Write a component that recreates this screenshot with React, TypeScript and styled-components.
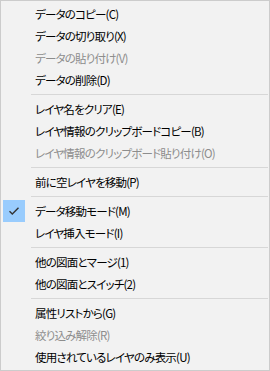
import { FC } from 'react';
import styled, { createGlobalStyle } from 'styled-components';

const GlobalStyle = createGlobalStyle`
    html, body {
        margin: 0;
        padding: 0;
        background: #f2f2f2;
    }
`

const MenuBox = styled.div`
    width: 270px;
    height: 371px;
    box-sizing: border-box;
    background: #f2f2f2;
    border: 1px solid #cccccc;
    padding: 2px;
    display: flex;
    flex-direction: column;
    font-family: "Noto Sans CJK JP", "Noto Sans", sans-serif;
    font-size: 11.5px;
    letter-spacing: -0.8px;
    font-feature-settings: "palt";
`

interface IItemRow {
    disabled?: boolean;
}

const ItemRow = styled.div<IItemRow>`
    height: 22px;
    display: flex;
    align-items: center;
    color: ${props => props.disabled ? '#8d8d8d' : '#000'};
`

interface IGutter {
    checked?: boolean;
}

const Gutter = styled.div<IGutter>`
    width: 22px;
    height: 22px;
    margin-right: 10px;
    display: flex;
    align-items: center;
    justify-content: center;
    background: ${props => props.checked ? '#99ccfd' : 'transparent'};
`

const Label = styled.span`
    line-height: 22px;
    white-space: nowrap;
`

const Separator = styled.div`
    height: 7px;
    display: flex;
    align-items: center;
    padding-left: 28px;
    margin-right: -1px;
    &::after {
        content: '';
        display: block;
        flex: 1;
        height: 1px;
        background: #d7d7d7;
    }
`

type Entry = { label: string; disabled?: boolean; checked?: boolean } | 'sep';

const entries: Entry[] = [
    { label: 'データのコピー(C)' },
    { label: 'データの切り取り(X)' },
    { label: 'データの貼り付け(V)', disabled: true },
    { label: 'データの削除(D)' },
    'sep',
    { label: 'レイヤ名をクリア(E)' },
    { label: 'レイヤ情報のクリップボードコピー(B)' },
    { label: 'レイヤ情報のクリップボード貼り付け(O)', disabled: true },
    'sep',
    { label: '前に空レイヤを移動(P)' },
    'sep',
    { label: 'データ移動モード(M)', checked: true },
    { label: 'レイヤ挿入モード(I)' },
    'sep',
    { label: '他の図面とマージ(1)' },
    { label: '他の図面とスイッチ(2)' },
    'sep',
    { label: '属性リストから(G)' },
    { label: '絞り込み解除(R)', disabled: true },
    { label: '使用されているレイヤのみ表示(U)' },
];

const CheckMark: FC = () => (
    <svg width="12" height="10" viewBox="0 0 12 10">
        <path d="M1.5 5.2 L4.3 8 L10.5 1.8" fill="none" stroke="#333" strokeWidth="1.4" />
    </svg>
);

const App: FC = () => {
    return (
        <>
            <GlobalStyle />
            <MenuBox>
                {entries.map((e, i) =>
                    e === 'sep' ? (
                        <Separator key={i} />
                    ) : (
                        <ItemRow key={i} disabled={e.disabled}>
                            <Gutter checked={e.checked}>{e.checked && <CheckMark />}</Gutter>
                            <Label>{e.label}</Label>
                        </ItemRow>
                    )
                )}
            </MenuBox>
        </>
    );
};

export default App;
